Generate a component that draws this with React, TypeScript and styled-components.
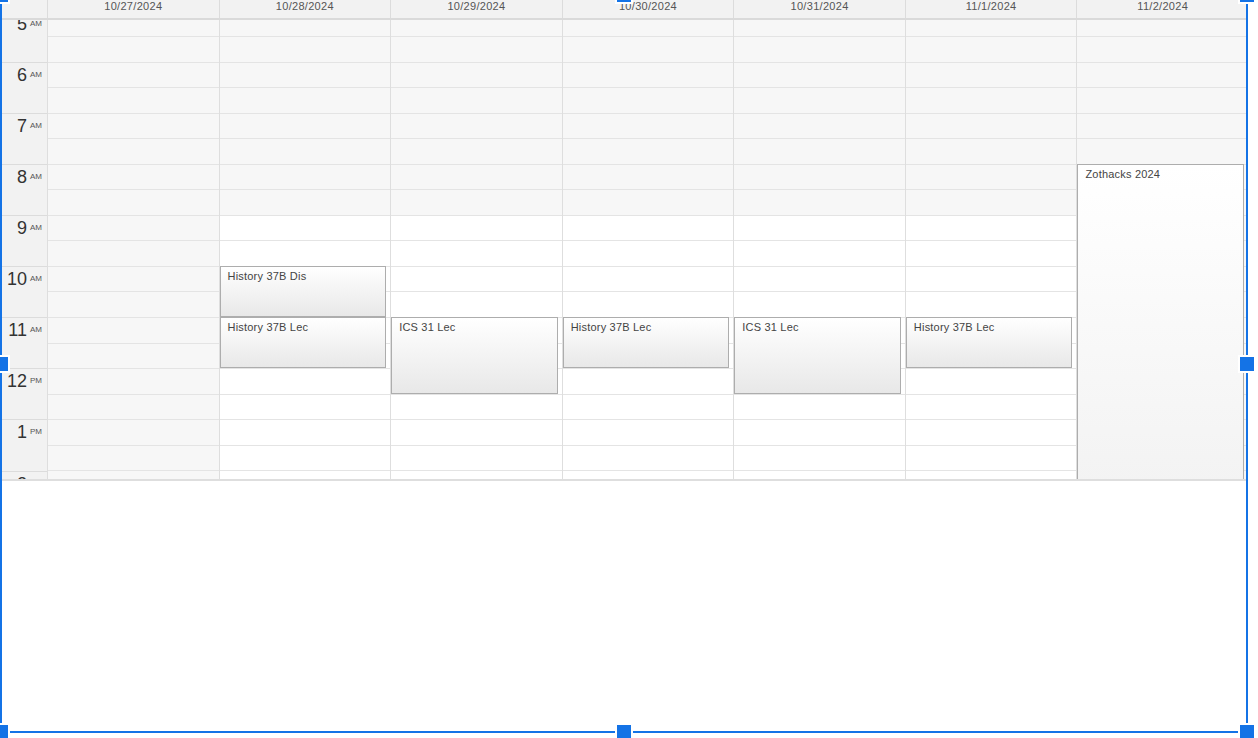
import React, { useLayoutEffect, useRef } from 'react';
import styled, { createGlobalStyle } from 'styled-components';

const HOUR = 51.12;
const SLOT = HOUR / 2;
const SCROLL_TOP = 265;
const BLUE = '#1473e6';

const GlobalStyle = createGlobalStyle`
  html, body {
    margin: 0;
    padding: 0;
    background: #ffffff;
  }
  body {
    font-family: "Liberation Sans", Arial, Helvetica, sans-serif;
    color: #333;
  }
  * {
    box-sizing: border-box;
  }
`;

const Stage = styled.div`
  position: relative;
  width: 1258px;
  height: 738px;
  overflow: hidden;
  background: #ffffff;
`;

const Calendar = styled.div`
  width: 1248px;
  height: 481px;
  display: flex;
  flex-direction: column;
  border-bottom: 2px solid #dedede;
`;

const HeaderRow = styled.div`
  display: grid;
  grid-template-columns: 47px repeat(7, 1fr);
  height: 20px;
  flex: none;
  background: #f2f2f2;
  border-bottom: 2px solid #dadada;
`;

const GutterHead = styled.div``;

const DayHead = styled.div`
  border-left: 1px solid #dcdcdc;
  text-align: center;
  font-size: 11px;
  line-height: 13px;
  letter-spacing: 0.3px;
  color: #555;
`;

const Body = styled.div`
  flex: 1;
  overflow: hidden;
`;

const Grid = styled.div`
  display: grid;
  grid-template-columns: 47px repeat(7, 1fr);
`;

const Gutter = styled.div`
  background: #f2f2f2;
`;

const TimeCell = styled.div`
  height: ${HOUR}px;
  border-top: 1px solid #dcdcdc;
  display: flex;
  justify-content: flex-end;
  align-items: flex-start;
  padding: 2px 5px 0 0;
`;

const HourNum = styled.span`
  font-size: 18px;
  line-height: 21px;
  color: #333;
`;

const Meridiem = styled.span`
  font-size: 8px;
  line-height: 8px;
  margin: 6px 0 0 3px;
  color: #555;
`;

const DayColumn = styled.div`
  position: relative;
  border-left: 1px solid #dedede;
`;

const Slot = styled.div<{ $off: boolean }>`
  height: ${SLOT}px;
  border-top: 1px solid #e4e4e4;
  background: ${(p) => (p.$off ? '#f7f7f7' : '#ffffff')};
`;

const Event = styled.div`
  position: absolute;
  left: 0;
  right: 4px;
  border: 1px solid #adadad;
  background: linear-gradient(#ffffff, #e8e8e8);
  padding: 3px 7px 0;
  font-size: 11px;
  line-height: 13px;
  letter-spacing: 0.2px;
  color: #444;
  overflow: hidden;
`;

const Selection = styled.div`
  position: absolute;
  left: 0;
  top: -6px;
  width: 1248px;
  height: 739px;
  border: 2px solid ${BLUE};
  pointer-events: none;
`;

const Handle = styled.div<{ $x: string; $y: string }>`
  position: absolute;
  left: ${(p) => p.$x};
  top: ${(p) => p.$y};
  width: 18px;
  height: 18px;
  transform: translate(-50%, -50%);
  background: ${BLUE};
  border: 2px solid #ffffff;
`;

const days = [
  '10/27/2024',
  '10/28/2024',
  '10/29/2024',
  '10/30/2024',
  '10/31/2024',
  '11/1/2024',
  '11/2/2024',
];

const events = [
  { day: 1, title: 'History 37B Dis', start: 10, end: 11 },
  { day: 1, title: 'History 37B Lec', start: 11, end: 12 },
  { day: 2, title: 'ICS 31 Lec', start: 11, end: 12.5 },
  { day: 3, title: 'History 37B Lec', start: 11, end: 12 },
  { day: 4, title: 'ICS 31 Lec', start: 11, end: 12.5 },
  { day: 5, title: 'History 37B Lec', start: 11, end: 12 },
  { day: 6, title: 'Zothacks 2024', start: 8, end: 20 },
];

const hours = Array.from({ length: 24 }, (_, i) => i);
const slots = Array.from({ length: 48 }, (_, i) => i);

const hourLabel = (h: number) => {
  const num = h % 12 === 0 ? 12 : h % 12;
  return { num, mer: h < 12 ? 'AM' : 'PM' };
};

const isOffHours = (day: number, slot: number) => {
  if (day === 0 || day === 6) return true;
  const h = slot / 2;
  return h < 9 || h >= 17;
};

const handles = [
  { x: '-1px', y: '-1px' },
  { x: '50%', y: '-1px' },
  { x: 'calc(100% + 1px)', y: '-1px' },
  { x: '-1px', y: '50%' },
  { x: 'calc(100% + 1px)', y: '50%' },
  { x: '-1px', y: 'calc(100% + 1px)' },
  { x: '50%', y: 'calc(100% + 1px)' },
  { x: 'calc(100% + 1px)', y: 'calc(100% + 1px)' },
];

const App = () => {
  const bodyRef = useRef<HTMLDivElement>(null);

  useLayoutEffect(() => {
    if (bodyRef.current) bodyRef.current.scrollTop = SCROLL_TOP;
  }, []);

  return (
    <>
      <GlobalStyle />
      <Stage>
        <Calendar>
          <HeaderRow>
            <GutterHead />
            {days.map((d) => (
              <DayHead key={d}>{d}</DayHead>
            ))}
          </HeaderRow>
          <Body ref={bodyRef}>
            <Grid>
              <Gutter>
                {hours.map((h) => {
                  const { num, mer } = hourLabel(h);
                  return (
                    <TimeCell key={h}>
                      <HourNum>{num}</HourNum>
                      <Meridiem>{mer}</Meridiem>
                    </TimeCell>
                  );
                })}
              </Gutter>
              {days.map((d, di) => (
                <DayColumn key={d}>
                  {slots.map((s) => (
                    <Slot key={s} $off={isOffHours(di, s)} />
                  ))}
                  {events
                    .filter((e) => e.day === di)
                    .map((e) => (
                      <Event
                        key={e.title + e.start}
                        style={{ top: e.start * HOUR, height: (e.end - e.start) * HOUR }}
                      >
                        {e.title}
                      </Event>
                    ))}
                </DayColumn>
              ))}
            </Grid>
          </Body>
        </Calendar>
        <Selection>
          {handles.map((h, i) => (
            <Handle key={i} $x={h.x} $y={h.y} />
          ))}
        </Selection>
      </Stage>
    </>
  );
};

export default App;
